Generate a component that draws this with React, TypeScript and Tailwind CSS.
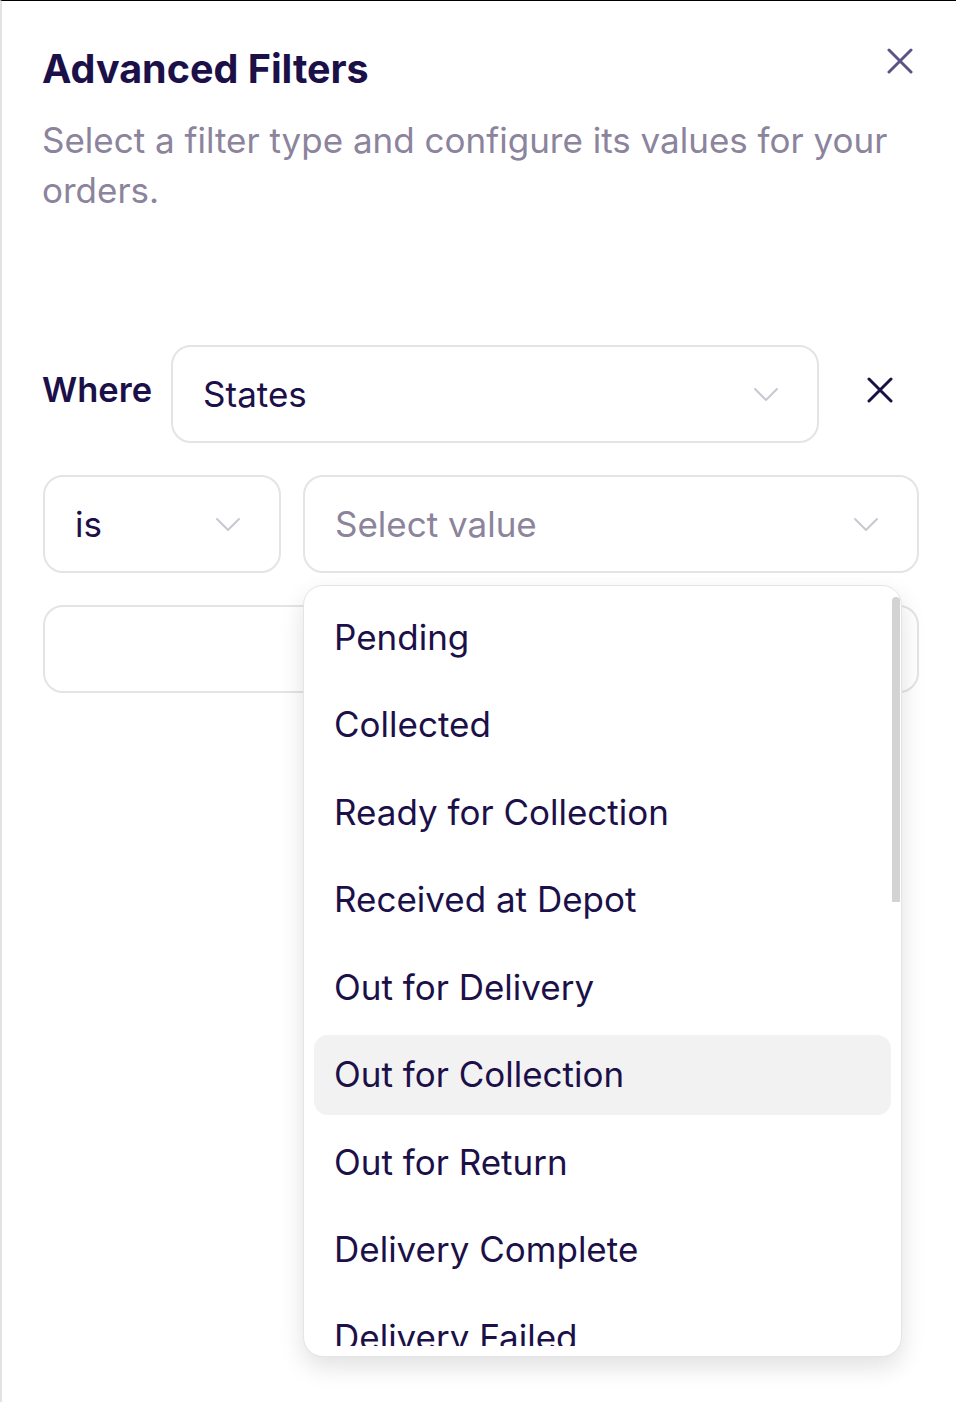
import { useState } from "react";

const states = [
  "Pending",
  "Collected",
  "Ready for Collection",
  "Received at Depot",
  "Out for Delivery",
  "Out for Collection",
  "Out for Return",
  "Delivery Complete",
  "Delivery Failed",
];

function Chevron() {
  return (
    <svg width="26" height="15" viewBox="0 0 26 15" fill="none" className="shrink-0">
      <path d="M2 2l11 11 11-11" stroke="#cac7d2" strokeWidth="2" strokeLinecap="round" strokeLinejoin="round" />
    </svg>
  );
}

function Cross({ color }: { color: string }) {
  return (
    <svg width="26" height="26" viewBox="0 0 26 26" fill="none">
      <path d="M2 2l22 22M24 2L2 24" stroke={color} strokeWidth="3" strokeLinecap="round" />
    </svg>
  );
}

export default function App() {
  const [hovered] = useState("Out for Collection");

  return (
    <div className="min-h-[1402px] w-full bg-white border-t border-t-black border-l-2 border-l-[#e2e2e4] font-['Inter',sans-serif] text-[#1c1049]">
      <div className="pl-[41px] pr-[37px] pt-[45px]">
        {/* Header */}
        <div className="flex items-start justify-between">
          <h1 className="-ml-[1px] text-[39.5px] leading-[46px] font-bold">Advanced Filters</h1>
          <button className="mt-[2px] mr-[6px]">
            <Cross color="#5d5485" />
          </button>
        </div>
        <p className="-ml-[1px] mt-[23px] text-[35px] leading-[50px] text-[#8b849c]">
          Select a filter type and configure its values for your orders.
        </p>

        {/* Where row */}
        <div className="mt-[130px] flex items-center">
          <span className="-ml-[1px] text-[34.5px] font-semibold leading-none mb-[8px]">Where</span>
          <div className="ml-[19px] flex-1 h-[98px] rounded-[20px] border-2 border-[#e4e4e7] pl-[30px] pr-[38px] flex items-center justify-between">
            <span className="text-[35px]">States</span>
            <Chevron />
          </div>
          <div className="w-[100px] pl-[48px] mb-[8px]">
            <Cross color="#1c1049" />
          </div>
        </div>

        {/* Operator + value */}
        <div className="relative">
          <div className="mt-[32px] flex gap-[22px]">
            <div className="w-[238px] h-[98px] rounded-[20px] border-2 border-[#e4e4e7] pl-[30px] pr-[38px] flex items-center justify-between">
              <span className="text-[35px]">is</span>
              <Chevron />
            </div>
            <div className="flex-1 h-[98px] rounded-[20px] border-2 border-[#e4e4e7] pl-[30px] pr-[38px] flex items-center justify-between">
              <span className="text-[35px] text-[#8b849c]">Select value</span>
              <Chevron />
            </div>
          </div>

          <div className="mt-[32px] h-[88px] rounded-[20px] border-2 border-[#e4e4e7]" />

          {/* Dropdown */}
          <div className="absolute left-[260px] top-[110px] w-[599px] h-[772px] rounded-[20px] border border-[#e4e4e7] bg-white shadow-[0_10px_24px_rgba(0,0,0,0.12)] p-[10px] pr-[9px]">
            <div className="h-full overflow-hidden pt-[1px] pr-[1px] flex flex-col gap-[7.5px]">
              {states.map((s) => (
                <div
                  key={s}
                  className={`h-[80px] shrink-0 rounded-[14px] pl-[20px] flex items-center text-[35px] ${s === hovered ? "bg-[#f2f2f3]" : ""}`}
                >
                  {s}
                </div>
              ))}
            </div>
            <div className="absolute right-[1px] top-[11px] w-[8px] h-[305px] rounded-t-full rounded-b-[3px] bg-[#d3d3d3]" />
          </div>
        </div>
      </div>
    </div>
  );
}
